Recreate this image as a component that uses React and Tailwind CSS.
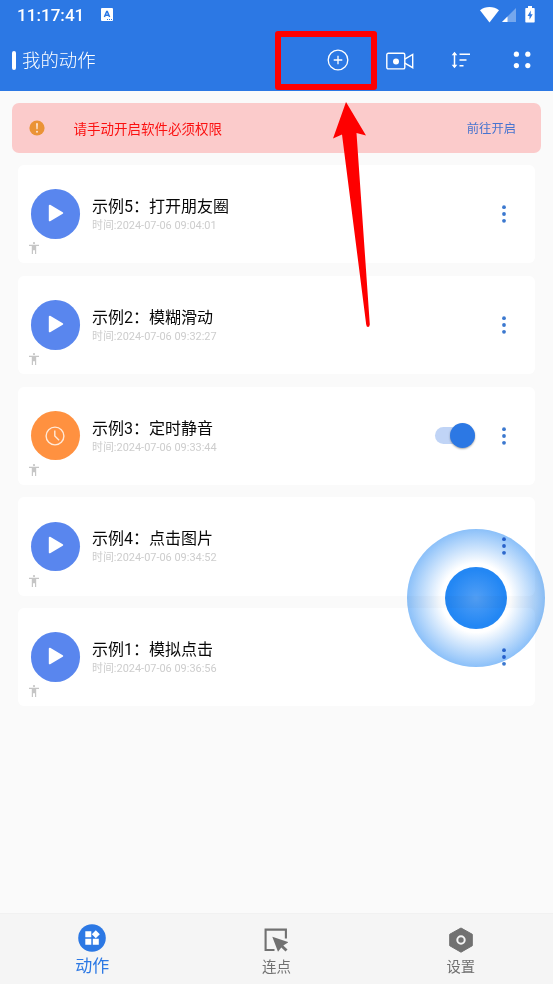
import React from 'react';

const actions = [
  { title: '示例5：打开朋友圈', time: '2024-07-06 09:04:01' },
  { title: '示例2：模糊滑动', time: '2024-07-06 09:32:27' },
  { title: '示例3：定时静音', time: '2024-07-06 09:33:44', timer: true },
  { title: '示例4：点击图片', time: '2024-07-06 09:34:52' },
  { title: '示例1：模拟点击', time: '2024-07-06 09:36:56' },
];

function StatusBar() {
  return (
    <div className="flex h-[30px] items-center pl-[17px] pr-[18px]">
      <span className="text-[17.1px] font-medium leading-[30px]">11:17:41</span>
      <svg className="ml-[17px] mb-px h-[13px] w-[12px]" viewBox="0 0 12 13">
        <rect width="12" height="13" rx="1" fill="currentColor" />
        <path d="M3.4 9 5.7 3.5h.6L8.6 9M4.3 7.2h3.4" fill="none" stroke="#2c78e4" strokeWidth="1.5" />
        <path d="M6 11.5h1M8 11.5h1M10 11.5h1" stroke="#2c78e4" />
      </svg>
      <svg className="ml-auto h-[16px] w-[19px]" viewBox="0 0 19 16">
        <path d="M0 3.2C5.4-1 13.6-1 19 3.2L9.5 15.5z" fill="currentColor" />
      </svg>
      <svg className="ml-[3px] h-[14px] w-[14px]" viewBox="0 0 14 14">
        <path d="M14 0v14H0z" fill="#fff" opacity=".35" />
        <path d="M5.5 8.5V14H0z" fill="#fff" />
      </svg>
      <svg className="mb-px ml-[9px] h-[17px] w-[10px]" viewBox="0 0 10 17">
        <path d="M3 0h4v2h2q.7 0 .7.7v13.1q0 .7-.7.7H1q-.7 0-.7-.7V2.7q0-.7.7-.7h2z" fill="currentColor" />
        <path d="M5.8 4.5 2.5 10h2v3.8L7.7 8.3h-2z" fill="#2c78e4" />
      </svg>
    </div>
  );
}

function Header() {
  return (
    <header className="h-[91px] bg-[#2c78e4] text-white">
      <StatusBar />
      <div className="flex h-[60px] items-center pl-[12px] pr-[22px]">
        <span className="h-[19px] w-[4px] rounded-full bg-white" />
        <h1 className="ml-[6px] mt-[2px] text-[18.4px] font-light leading-[60px]">我的动作</h1>
        <svg className="ml-auto h-[22px] w-[22px]" viewBox="0 0 22 22" fill="none" stroke="currentColor" strokeWidth="1.3">
          <circle cx="11" cy="11" r="9.8" />
          <path d="M11 6.7v8.6M6.7 11h8.6" />
        </svg>
        <svg className="ml-[37px] mt-[2px] h-[18px] w-[28px]" viewBox="0 0 28 18" fill="none" stroke="currentColor" strokeWidth="1.4">
          <rect x=".8" y="1.3" width="18" height="15.6" rx="1.5" />
          <path d="M18.8 7.2 26.7 2.4v13.3l-7.9-4.600" />
          <circle cx="10" cy="9.5" r="3" fill="currentColor" stroke="none" />
        </svg>
        <svg className="ml-[37px] h-[18px] w-[20px]" viewBox="0 0 20 18" fill="none" stroke="currentColor">
          <path d="M3.5 2v14" strokeWidth="1.5" />
          <path d="M3.5 .8 6.3 4.3H.7zM3.5 17.2.7 13.7h5.6z" fill="currentColor" stroke="none" />
          <path d="M8.500 3.3H19M8.5 9h7M8.5 14.7h4" strokeWidth="1.6" />
        </svg>
        <svg className="ml-[42px] h-[18px] w-[18px]" viewBox="0 0 18 18" fill="currentColor">
          <circle cx="3.4" cy="3.2" r="2.6" />
          <circle cx="14.8" cy="3.2" r="2.6" />
          <circle cx="3.4" cy="14.6" r="2.6" />
          <circle cx="14.8" cy="14.6" r="2.6" />
        </svg>
      </div>
    </header>
  );
}

function PermissionBanner() {
  return (
    <div className="mx-[12px] mt-[12px] flex h-[50px] items-center rounded-[7px] bg-[#fbcbcb] pl-[17px] pr-[25px]">
      <svg className="h-[16px] w-[16px]" viewBox="0 0 16 16">
        <circle cx="8" cy="8" r="7.6" fill="#ea9336" />
        <path d="M7 3.2h2l-.4 6H7.4z" fill="#fde3d2" />
        <circle cx="8" cy="11.7" r="1" fill="#fde3d2" />
      </svg>
      <span className="ml-[28.5px] mt-[2px] text-[13.5px] text-[#fb1010]">请手动开启软件必须权限</span>
      <span className="ml-auto mt-[2px] text-[12.3px] text-[#4774cf]">前往开启</span>
    </div>
  );
}

function ActionCard({ action }) {
  return (
    <div className="relative flex h-[98.25px] items-center rounded-[6px] bg-white pl-[12.5px] pr-[28px]">
      <div className={`flex h-[49.5px] w-[49.5px] items-center justify-center rounded-full ${action.timer ? 'bg-[#ff9140]' : 'bg-[#5986ee]'}`}>
        {action.timer ? (
          <svg className="h-[20px] w-[20px]" viewBox="0 0 20 20" fill="none" stroke="#ffe9d8" strokeWidth="1.4">
            <circle cx="10" cy="10" r="8.9" />
            <path d="M9.8 4.5V10l4.3 4.2" />
          </svg>
        ) : (
          <svg className="mb-[2px] ml-[1px] h-[18px] w-[16px]" viewBox="0 0 16 18">
            <path d="M1.7 1.6v14.8L14.3 9z" fill="#fff" stroke="#fff" strokeWidth="1.8" strokeLinejoin="round" />
          </svg>
        )}
      </div>
      <div className="ml-[12px] mt-px">
        <p className="text-[16px] leading-[22px] text-[#080808]">{action.title}</p>
        <p className="text-[10.95px] leading-[15px] text-[#cdcdcd]">时间:{action.time}</p>
      </div>
      {action.timer && (
        <div className="ml-auto mr-[26px] flex h-[17px] w-[40px] items-center justify-end rounded-full bg-[#c0d4f6]">
          <span className="h-[25px] w-[25px] shrink-0 rounded-full bg-[#2c78e4] shadow-[0_1px_2px_rgba(0,0,0,0.35)]" />
        </div>
      )}
      <svg className={`h-[18px] w-[6px] ${action.timer ? '' : 'ml-auto'}`} viewBox="0 0 6 18" fill="#3b78cf">
        <circle cx="3" cy="2.2" r="1.9" />
        <circle cx="3" cy="9" r="1.9" />
        <circle cx="3" cy="15.8" r="1.9" />
      </svg>
      <svg className="absolute bottom-[9px] left-[11px] h-[12px] w-[10px]" viewBox="0 0 10 12" fill="#c6c6c6">
        <circle cx="5" cy="1.1" r="1.1" />
        <path d="M0 2.8h10v1.2H7.2V12H6V8.3H4V12H2.8V4H0z" />
      </svg>
    </div>
  );
}

function BottomNav() {
  return (
    <nav className="grid h-[71px] grid-cols-3 border-t border-[#f1f1f1] bg-[#f5f5f5] text-[#717171]">
      <div className="flex flex-col items-center pt-[10px] text-[#2c78e4]">
        <svg className="h-[28px] w-[28px]" viewBox="0 0 28 28">
          <circle cx="14" cy="14" r="13.8" fill="#2c78e4" />
          <path d="M7.3 7.3h6v6h-6zM7.3 14.8h6v6h-6zM14.8 14.8h6v6h-6zM17.8 6.3l4 4-4 4-4-4z" fill="#fff" />
        </svg>
        <span className="mt-[2px] text-[17px] leading-[24px]">动作</span>
      </div>
      <div className="flex flex-col items-center pt-[14px]">
        <svg className="h-[24px] w-[24px]" viewBox="0 0 24 24">
          <path d="M10.5 22H1.6V1.6h20.3v9" fill="none" stroke="currentColor" strokeWidth="2.1" />
          <path d="M8.3 8.7 24.3 14.2l-5 3.2 4.2 4.2-2 2-4.2-4.2-3.3 4.4z" fill="currentColor" />
        </svg>
        <span className="mt-[6px] text-[14.5px] leading-[20px]">连点</span>
      </div>
      <div className="flex flex-col items-center pt-[13px]">
        <svg className="h-[26px] w-[26px]" viewBox="0 0 26 26">
          <path d="M13 1 24.3 7.3v11.4L13 25.2 1.7 18.7V7.3z" fill="currentColor" stroke="currentColor" strokeLinejoin="round" />
          <circle cx="13" cy="13" r="3.7" fill="none" stroke="#f5f5f5" strokeWidth="2" />
        </svg>
        <span className="mt-[4px] text-[14.3px] leading-[20px]">设置</span>
      </div>
    </nav>
  );
}

export default function App() {
  return (
    <div className="relative flex h-[984px] w-[553px] flex-col overflow-hidden bg-[#fafafa] font-[Roboto,'Noto_Sans_CJK_SC',sans-serif]">
      <Header />
      <main className="flex-1">
        <PermissionBanner />
        <div className="mx-[18px] mt-[12px] flex flex-col gap-[12.5px]">
          {actions.map((action) => (
            <ActionCard key={action.title} action={action} />
          ))}
        </div>
      </main>
      <BottomNav />

      {/* floating record button */}
      <div className="absolute left-[407px] top-[529px] flex h-[138px] w-[138px] items-center justify-center rounded-full bg-[radial-gradient(circle_closest-side,#ffffff_50%,#8bc0f9_100%)] mix-blend-multiply">
        <div className="h-[62px] w-[62px] rounded-full bg-[radial-gradient(circle_closest-side,#529ff5,#2387f4_90%)]" />
      </div>

      {/* highlight box and arrow */}
      <div className="absolute left-[275px] top-[31px] h-[59px] w-[102px] rounded-[3px] border-[6px] border-[#fe0000]" />
      <svg className="absolute left-[330px] top-[100px] h-[230px] w-[42px]" viewBox="0 0 42 230">
        <path d="M16 2 36 35.5 26.5 33 39.8 224.5Q39.5 227 38 227 36.5 227 36.2 224.5L12 34.5 3 38.5z" fill="#fe0000" />
      </svg>
    </div>
  );
}
